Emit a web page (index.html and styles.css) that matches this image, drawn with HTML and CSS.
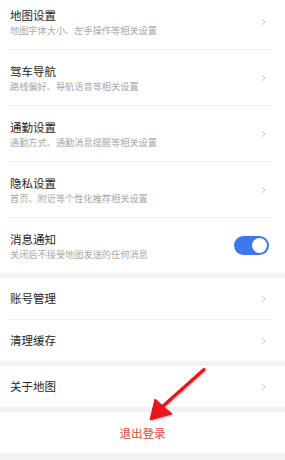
FILE: index.html
```html
<!DOCTYPE html>
<html lang="zh">
<head>
<meta charset="utf-8">
<link rel="stylesheet" href="styles.css">
</head>
<body>
<div class="page">
  <div class="section first">
    <div class="row double">
      <div class="text"><div class="title">地图设置</div><div class="sub">地图字体大小、左手操作等相关设置</div></div>
      <svg class="chev" viewBox="0 0 5 8"><path d="M1 1 L4 4 L1 7" /></svg>
    </div>
    <div class="row double">
      <div class="text"><div class="title">驾车导航</div><div class="sub">路线偏好、导航语音等相关设置</div></div>
      <svg class="chev" viewBox="0 0 5 8"><path d="M1 1 L4 4 L1 7" /></svg>
    </div>
    <div class="row double">
      <div class="text"><div class="title">通勤设置</div><div class="sub">通勤方式、通勤消息提醒等相关设置</div></div>
      <svg class="chev" viewBox="0 0 5 8"><path d="M1 1 L4 4 L1 7" /></svg>
    </div>
    <div class="row double">
      <div class="text"><div class="title">隐私设置</div><div class="sub">首页、附近等个性化推荐相关设置</div></div>
      <svg class="chev" viewBox="0 0 5 8"><path d="M1 1 L4 4 L1 7" /></svg>
    </div>
    <div class="row double last">
      <div class="text"><div class="title">消息通知</div><div class="sub">关闭后不接受地图发送的任何消息</div></div>
      <div class="toggle"><div class="knob"></div></div>
    </div>
  </div>
  <div class="section">
    <div class="row single">
      <div class="title">账号管理</div>
      <svg class="chev" viewBox="0 0 5 8"><path d="M1 1 L4 4 L1 7" /></svg>
    </div>
    <div class="row single last">
      <div class="title">清理缓存</div>
      <svg class="chev" viewBox="0 0 5 8"><path d="M1 1 L4 4 L1 7" /></svg>
    </div>
  </div>
  <div class="section">
    <div class="row single last">
      <div class="title">关于地图</div>
      <svg class="chev" viewBox="0 0 5 8"><path d="M1 1 L4 4 L1 7" /></svg>
    </div>
  </div>
  <div class="section">
    <div class="logout">退出登录</div>
  </div>
  <svg class="arrow" width="285" height="460" viewBox="0 0 285 460">
    <defs>
      <filter id="sh" x="-20%" y="-20%" width="140%" height="140%">
        <feDropShadow dx="1" dy="1" stdDeviation="1" flood-color="#000" flood-opacity="0.25"/>
      </filter>
    </defs>
    <g filter="url(#sh)" fill="#e8141a" stroke="#e8141a">
      <line x1="204" y1="369.5" x2="162" y2="407" stroke-width="3.2" stroke-linecap="round"/>
      <polygon points="150,420 155,399 172,414" stroke-width="1" stroke-linejoin="round"/>
    </g>
  </svg>
</div>
</body>
</html>
```
FILE: styles.css
```css
html, body {
  margin: 0;
  padding: 0;
  background: #f2f2f2;
  font-family: "Noto Sans CJK SC", "Noto Sans", sans-serif;
}
.page {
  position: relative;
  width: 285px;
  height: 460px;
  overflow: hidden;
}
.section {
  background: #fff;
  margin-bottom: 5px;
}
.section.first {
  margin-top: -6px;
}
.row {
  display: flex;
  align-items: center;
  justify-content: space-between;
  margin: 0 13px 0 8px;
  padding: 0 3px 0 2px;
  border-bottom: 1px solid #f0f0f0;
}
.row.last {
  border-bottom: none;
}
.row.double {
  height: 55px;
}
.row.single {
  height: 41px;
}
.text {
  display: flex;
  flex-direction: column;
  gap: 1px;
}
.title {
  font-size: 11.5px;
  line-height: 15px;
  color: #262626;
}
.sub {
  font-size: 9.2px;
  line-height: 12px;
  color: #a8a8a8;
}
.chev {
  width: 5px;
  height: 8px;
  margin-right: 3px;
  fill: none;
  stroke: #c8c8c8;
  stroke-width: 1;
}
.toggle {
  width: 35px;
  height: 19px;
  border-radius: 10px;
  background: #3b78ef;
  display: flex;
  align-items: center;
  justify-content: flex-end;
  padding-right: 2px;
  box-sizing: border-box;
}
.knob {
  width: 15px;
  height: 15px;
  border-radius: 50%;
  background: #fff;
}
.logout {
  height: 41px;
  display: flex;
  align-items: center;
  justify-content: center;
  font-size: 11.5px;
  color: #e2483a;
}
.arrow {
  position: absolute;
  left: 0;
  top: 0;
  pointer-events: none;
}
```
